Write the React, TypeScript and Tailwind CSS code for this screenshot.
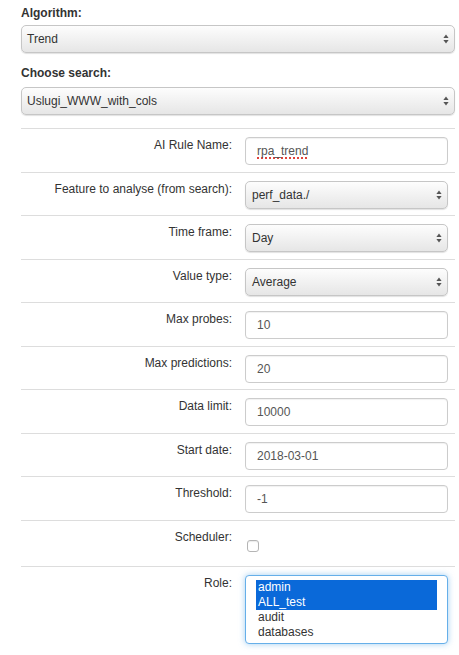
import React from 'react';

const font = { fontFamily: '"Liberation Sans", Arial, Helvetica, sans-serif' };

function Arrows() {
  return (
    <svg width="6" height="10" viewBox="0 0 6 10" className="shrink-0">
      <path d="M3 0.5 L5.6 4 L0.4 4 Z" fill="#555" />
      <path d="M3 9.5 L5.6 6 L0.4 6 Z" fill="#555" />
    </svg>
  );
}

function NativeSelect({ value, padLeft = 'pl-[5px]' }: { value: string; padLeft?: string }) {
  return (
    <div
      className={`flex h-[28px] items-center justify-between rounded-[5px] border border-[#c6c6c6] bg-gradient-to-b from-[#fdfdfd] to-[#e6e6e6] ${padLeft} pr-[5px] text-[12px] text-[#333] shadow-[0_1px_1px_rgba(0,0,0,0.12)]`}
    >
      <span>{value}</span>
      <Arrows />
    </div>
  );
}

function TextInput({ value, spell }: { value: string; spell?: boolean }) {
  return (
    <div className="flex h-[28px] items-center rounded-[4px] border border-[#ccc] bg-white pl-[11px] text-[12px] text-[#555] shadow-[inset_0_1px_1px_rgba(0,0,0,0.06)]">
      <span className={spell ? 'underline decoration-dotted decoration-[#e0433a] decoration-2 underline-offset-[2px]' : ''}>{value}</span>
    </div>
  );
}

type Row = { label: string; kind: 'input' | 'select'; value: string; spell?: boolean };

const rows: Row[] = [
  { label: 'AI Rule Name:', kind: 'input', value: 'rpa_trend', spell: true },
  { label: 'Feature to analyse (from search):', kind: 'select', value: 'perf_data./' },
  { label: 'Time frame:', kind: 'select', value: 'Day' },
  { label: 'Value type:', kind: 'select', value: 'Average' },
  { label: 'Max probes:', kind: 'input', value: '10' },
  { label: 'Max predictions:', kind: 'input', value: '20' },
  { label: 'Data limit:', kind: 'input', value: '10000' },
  { label: 'Start date:', kind: 'input', value: '2018-03-01' },
  { label: 'Threshold:', kind: 'input', value: '-1' },
];

function FormRow({ label, children, className = 'pb-[6.5px]' }: { label: string; children: React.ReactNode; className?: string }) {
  return (
    <div className={`flex border-t border-[#ddd] pt-[8px] ${className}`}>
      <div className="w-[216px] shrink-0 pr-[5px] text-right text-[12px] leading-[17px] text-[#333]">{label}</div>
      <div className="flex-1 pl-[8px] pr-[7px]">{children}</div>
    </div>
  );
}

export default function App() {
  const roles = [
    { name: 'admin', selected: true },
    { name: 'ALL_test', selected: true },
    { name: 'audit', selected: false },
    { name: 'databases', selected: false },
  ];

  return (
    <div className="min-h-[655px] w-[459px] bg-white pl-[21px] pr-[4px] pt-[5px]" style={font}>
      <div className="mb-[3px] h-[17px] text-[12px] font-bold leading-[17px] text-[#333]">Algorithm:</div>
      <NativeSelect value="Trend" />
      <div className="mb-[5px] mt-[12px] h-[17px] text-[12px] font-bold leading-[17px] text-[#333]">Choose search:</div>
      <NativeSelect value="Uslugi_WWW_with_cols" />

      <div className="mt-[13px]">
        {rows.map((r) => (
          <FormRow key={r.label} label={r.label}>
            {r.kind === 'input' ? <TextInput value={r.value} spell={r.spell} /> : <NativeSelect value={r.value} padLeft="pl-[6px]" />}
          </FormRow>
        ))}

        <FormRow label="Scheduler:" className="pb-[14px]">
          <div className="pl-[2px] pt-[11px]">
            <div className="h-[12px] w-[12px] rounded-[3px] border border-[#b5b5b5] bg-white shadow-[inset_0_1px_1px_rgba(0,0,0,0.08)]" />
          </div>
        </FormRow>

        <FormRow label="Role:" className="pb-[8px]">
          <div className="h-[69px] rounded-[4px] border border-[#66afe9] bg-white pb-[4px] pl-[10px] pr-[10px] pt-[4px] text-[12px] leading-[15px] text-[#333] shadow-[0_0_6px_rgba(102,175,233,0.6)]">
            {roles.map((role) => (
              <div
                key={role.name}
                className={role.selected ? 'bg-[#0a69d9] pl-[2px] text-white' : 'pl-[2px] text-[#333]'}
              >
                {role.name}
              </div>
            ))}
          </div>
        </FormRow>
      </div>
    </div>
  );
}
